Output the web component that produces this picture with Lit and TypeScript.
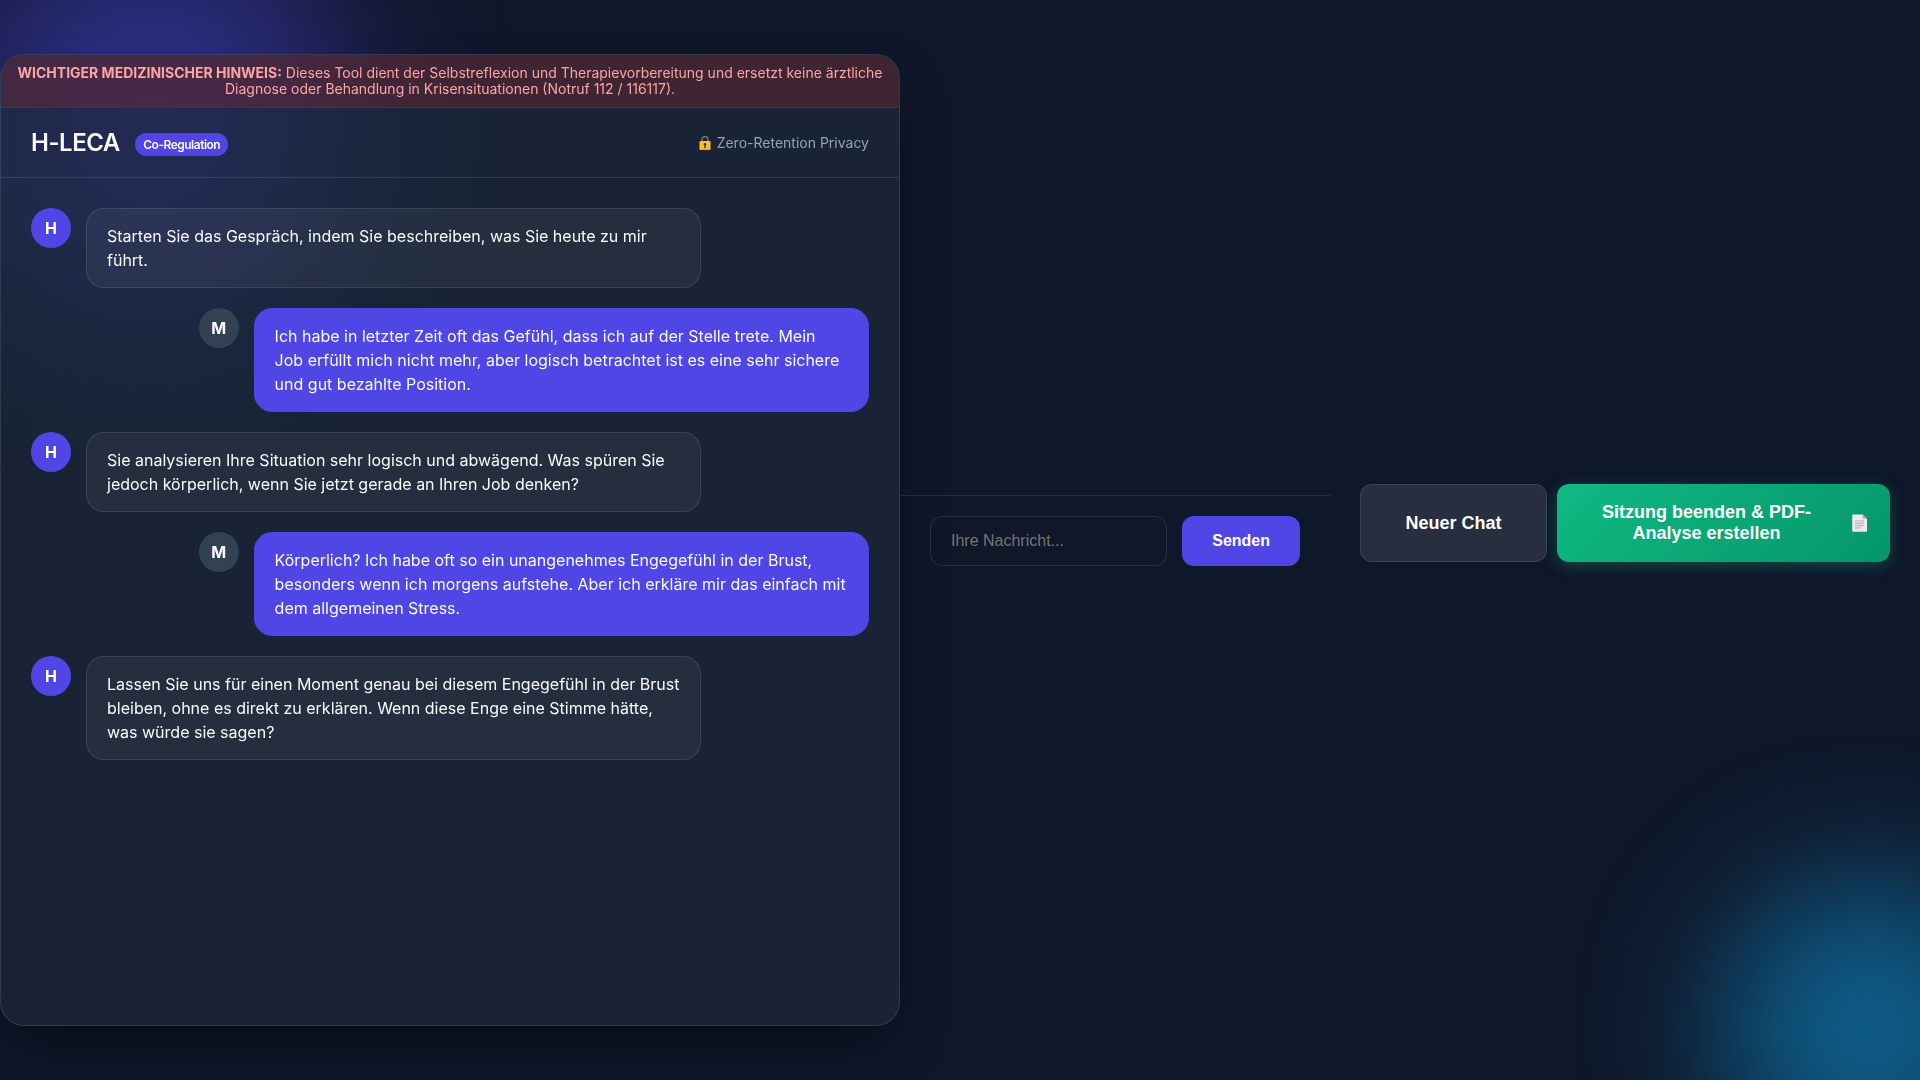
import { LitElement, html, css } from "lit";
import { customElement, property, state } from "lit/decorators.js";

type Role = "assistant" | "user";

interface Message {
  role: Role;
  text: string;
}

@customElement("chat-message")
class ChatMessage extends LitElement {
  @property({ reflect: true }) role: Role = "assistant";
  @property() text = "";

  static styles = css`
    :host {
      display: flex;
      align-items: flex-start;
      gap: 15px;
      width: 80%;
    }
    :host([role="user"]) {
      align-self: flex-end;
    }
    .avatar {
      flex: none;
      display: flex;
      align-items: center;
      justify-content: center;
      width: 40px;
      height: 40px;
      border-radius: 50%;
      background: #4f46e5;
      color: #fff;
      font-weight: 700;
    }
    .bubble {
      flex: 1;
      margin: 0;
      padding: 15px 20px;
      border: 1px solid rgba(255, 255, 255, 0.1);
      border-radius: 18px;
      background: rgba(255, 255, 255, 0.05);
      line-height: 24px;
    }
    :host([role="user"]) .avatar {
      background: #334155;
    }
    :host([role="user"]) .bubble {
      background: #4f46e5;
      border-color: #4f46e5;
    }
  `;

  render() {
    return html`
      <div class="avatar">${this.role === "user" ? "M" : "H"}</div>
      <p class="bubble">${this.text}</p>
    `;
  }
}

@customElement("app-root")
class AppRoot extends LitElement {
  @state() private messages: Message[] = [
    {
      role: "assistant",
      text: "Starten Sie das Gespräch, indem Sie beschreiben, was Sie heute zu mir führt.",
    },
    {
      role: "user",
      text: "Ich habe in letzter Zeit oft das Gefühl, dass ich auf der Stelle trete. Mein Job erfüllt mich nicht mehr, aber logisch betrachtet ist es eine sehr sichere und gut bezahlte Position.",
    },
    {
      role: "assistant",
      text: "Sie analysieren Ihre Situation sehr logisch und abwägend. Was spüren Sie jedoch körperlich, wenn Sie jetzt gerade an Ihren Job denken?",
    },
    {
      role: "user",
      text: "Körperlich? Ich habe oft so ein unangenehmes Engegefühl in der Brust, besonders wenn ich morgens aufstehe. Aber ich erkläre mir das einfach mit dem allgemeinen Stress.",
    },
    {
      role: "assistant",
      text: "Lassen Sie uns für einen Moment genau bei diesem Engegefühl in der Brust bleiben, ohne es direkt zu erklären. Wenn diese Enge eine Stimme hätte, was würde sie sagen?",
    },
  ];

  static styles = css`
    * {
      box-sizing: border-box;
    }
    :host {
      display: block;
      position: relative;
      overflow: hidden;
      background: #0f172a;
      color: #f8fafc;
      font-family: Inter, "Liberation Sans", sans-serif;
      font-size: 16px;
    }

    /* Blurred glows behind the page */
    .glow {
      position: absolute;
      border-radius: 50%;
      opacity: 0.5;
    }
    .glow-indigo {
      top: -70px;
      left: -50px;
      width: 400px;
      height: 400px;
      background: #4f46e5;
      filter: blur(80px);
    }
    .glow-sky {
      right: -100px;
      bottom: -100px;
      width: 300px;
      height: 300px;
      background: #0ea5e9;
      filter: blur(70px);
    }

    .page {
      position: relative;
      display: grid;
      grid-template-columns: minmax(0, 90fr) minmax(0, 43fr) minmax(0, 59fr);
      align-items: center;
      min-height: 100vh;
    }

    .panel {
      display: flex;
      flex-direction: column;
      min-height: 90vh;
      overflow: hidden;
      border: 1px solid rgba(255, 255, 255, 0.1);
      border-radius: 24px;
      background: rgba(30, 41, 59, 0.7);
      backdrop-filter: blur(20px);
      box-shadow: 0 25px 50px -12px rgba(0, 0, 0, 0.5);
    }
    .notice {
      margin: 0;
      padding: 10px 15px;
      border-bottom: 1px solid #7f1d1d;
      background: rgba(220, 38, 38, 0.2);
      color: #fca5a5;
      font-size: 14px;
      line-height: 16px;
      text-align: center;
    }
    .header {
      display: flex;
      align-items: center;
      justify-content: space-between;
      padding: 20px 30px;
      border-bottom: 1px solid rgba(255, 255, 255, 0.1);
    }
    .title {
      margin: 0;
      font-size: 24px;
      font-weight: 600;
      line-height: 29px;
      letter-spacing: -0.5px;
    }
    .badge {
      display: inline-block;
      margin-left: 10px;
      padding: 4px 8px;
      border-radius: 12px;
      background: #4f46e5;
      font-size: 12px;
      line-height: 15px;
      vertical-align: middle;
    }
    .privacy {
      display: flex;
      align-items: center;
      gap: 6px;
      color: #94a3b8;
      font-size: 14px;
      line-height: 17px;
    }
    .lock {
      width: 12px;
      height: 14px;
    }
    .messages {
      display: flex;
      flex-direction: column;
      gap: 20px;
      padding: 30px;
    }

    .composer {
      display: flex;
      gap: 15px;
      padding: 20px 30px;
      border-top: 1px solid rgba(255, 255, 255, 0.1);
    }
    .field {
      flex: 1;
      min-width: 0;
      height: 50px;
      padding: 15px 20px;
      border: 1px solid rgba(255, 255, 255, 0.1);
      border-radius: 12px;
      background: rgba(15, 23, 42, 0.6);
      color: #fff;
      font: 16px "Liberation Sans", Arial, sans-serif;
    }
    .field::placeholder {
      color: #757575;
    }
    .button {
      border: none;
      border-radius: 12px;
      color: #fff;
      font-family: "Liberation Sans", Arial, sans-serif;
      font-weight: 700;
      cursor: pointer;
    }
    .send {
      padding: 0 30px;
      background: #4f46e5;
      font-size: 16px;
    }

    .actions {
      display: grid;
      grid-template-columns: minmax(0, 187fr) minmax(0, 333fr);
      gap: 10px;
      padding: 0 30px 34px;
    }
    .action {
      padding: 18px 20px;
      font-size: 18px;
      line-height: 21px;
    }
    .restart {
      border: 1px solid rgba(255, 255, 255, 0.1);
      background: rgba(255, 255, 255, 0.1);
    }
    .finish {
      display: flex;
      align-items: center;
      gap: 12px;
      background: linear-gradient(135deg, #10b981, #059669);
      box-shadow: 0 4px 15px rgba(16, 185, 129, 0.3);
    }
    .finish-label {
      flex: 1;
    }
    .document {
      flex: none;
      width: 22px;
      height: 18px;
    }
  `;

  render() {
    return html`
      <div class="glow glow-indigo"></div>
      <div class="glow glow-sky"></div>
      <main class="page">
        <section class="panel">
          <p class="notice">
            <strong>WICHTIGER MEDIZINISCHER HINWEIS:</strong> Dieses Tool dient der Selbstreflexion und
            Therapievorbereitung und ersetzt keine ärztliche Diagnose oder Behandlung in Krisensituationen (Notruf 112 /
            116117).
          </p>
          <header class="header">
            <h1 class="title">H-LECA <span class="badge">Co-Regulation</span></h1>
            <div class="privacy">
              <svg class="lock" viewBox="0 0 12 14" aria-hidden="true">
                <path d="M3 6V3.6a3 3 0 0 1 6 0V6" fill="none" stroke="#6f7a80" stroke-width="1.4" />
                <rect x="0.5" y="5" width="11" height="9" rx="1.2" fill="#fbc02d" />
                <path d="M0.5 12.6h11v.4a1 1 0 0 1-1 1h-9a1 1 0 0 1-1-1z" fill="#f2a62e" />
                <circle cx="6" cy="8.4" r="1.3" fill="#3e3328" />
                <path d="M5.5 8.8h1L6.8 12H5.2z" fill="#3e3328" />
              </svg>
              <span>Zero-Retention Privacy</span>
            </div>
          </header>
          <div class="messages">
            ${this.messages.map((m) => html`<chat-message role=${m.role} .text=${m.text}></chat-message>`)}
          </div>
        </section>

        <form class="composer" @submit=${(e: Event) => e.preventDefault()}>
          <input class="field" type="text" aria-label="Ihre Nachricht" placeholder="Ihre Nachricht..." />
          <button class="button send" type="submit">Senden</button>
        </form>

        <div class="actions">
          <button class="button action restart" type="button">Neuer Chat</button>
          <button class="button action finish" type="button">
            <span class="finish-label">Sitzung beenden &amp; PDF-Analyse erstellen</span>
            <svg class="document" viewBox="0 0 22 18" aria-hidden="true">
              <path d="M5 .5h9.5L19 5v12a.8.8 0 0 1-.8.8H5a.8.8 0 0 1-.8-.8V1.3A.8.8 0 0 1 5 .5z" fill="#eeeaf2" />
              <path d="M14.5 .5 19 5h-3.7a.8.8 0 0 1-.8-.8z" fill="#b9b5c3" />
              <path d="M7 7h9M7 9.3h9M7 11.6h9M7 13.9h6" stroke="#a5a2b0" stroke-width="0.9" />
            </svg>
          </button>
        </div>
      </main>
    `;
  }
}
